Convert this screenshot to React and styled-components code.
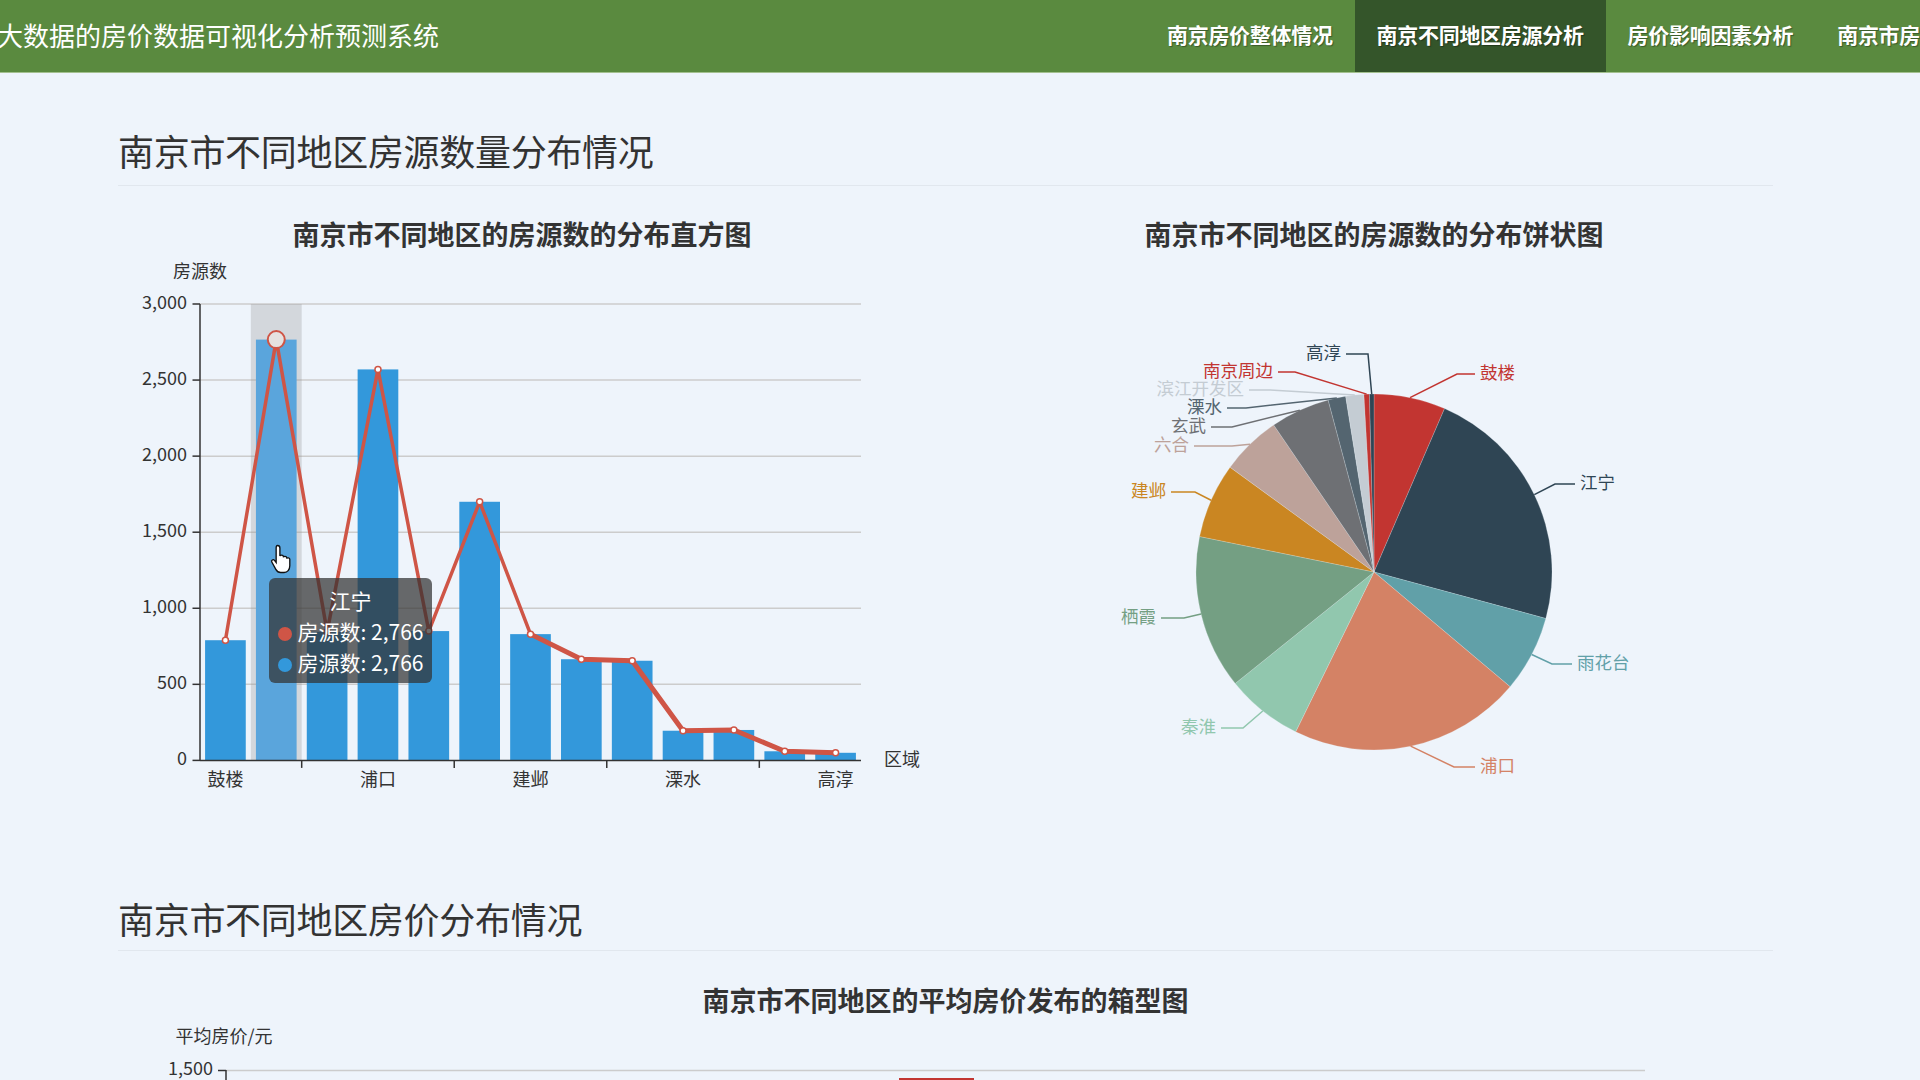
import React from 'react';
import styled, { createGlobalStyle } from 'styled-components';

const GlobalStyle = createGlobalStyle`
  html, body {
    margin: 0;
    padding: 0;
    background: #eef4fb;
    overflow: hidden;
  }
  body {
    font-family: "Microsoft YaHei", "Noto Sans CJK SC", "Noto Sans", sans-serif;
    color: #333;
  }
`;

const CJK = '"Microsoft YaHei", "Noto Sans CJK SC", sans-serif';

const districts = [
  { name: '鼓楼', value: 790 },
  { name: '江宁', value: 2766 },
  { name: '雨花台', value: 845 },
  { name: '浦口', value: 2570 },
  { name: '秦淮', value: 850 },
  { name: '栖霞', value: 1700 },
  { name: '建邺', value: 830 },
  { name: '六合', value: 665 },
  { name: '玄武', value: 655 },
  { name: '溧水', value: 195 },
  { name: '滨江开发区', value: 200 },
  { name: '南京周边', value: 60 },
  { name: '高淳', value: 50 }
];

const palette = [
  '#c23531', '#2f4554', '#61a0a8', '#d48265', '#91c7ae', '#749f83',
  '#ca8622', '#bda29a', '#6e7074', '#546570', '#c4ccd3', '#c23531', '#2f4554'
];

// leader line elbows / ends of the pie labels, page coords
const pieLabels = [
  { elbow: [1457, 374], end: [1475, 374], side: 'r' },
  { elbow: [1555, 484], end: [1575, 484], side: 'r' },
  { elbow: [1552, 664], end: [1572, 664], side: 'r' },
  { elbow: [1454, 767], end: [1475, 767], side: 'r' },
  { elbow: [1243, 728], end: [1221, 728], side: 'l' },
  { elbow: [1184, 618], end: [1161, 618], side: 'l' },
  { elbow: [1195, 492], end: [1171, 492], side: 'l' },
  { elbow: [1232, 446], end: [1194, 446], side: 'l' },
  { elbow: [1232, 427], end: [1211, 427], side: 'l' },
  { elbow: [1246, 408], end: [1227, 408], side: 'l' },
  { elbow: [1270, 390], end: [1249, 390], side: 'l' },
  { elbow: [1295, 372], end: [1278, 372], side: 'l' },
  { elbow: [1368, 354], end: [1346, 354], side: 'l' }
];

const Header = styled.header`
  display: flex;
  align-items: stretch;
  height: 72px;
  background: #5a8a3f;
  border-bottom: 1px solid #a3c08f;
  white-space: nowrap;
  overflow: hidden;
`;

const Brand = styled.div`
  display: flex;
  align-items: center;
  flex: 0 0 1148px;
  margin-left: -3px;
  padding-bottom: 4px;
  font-size: 26px;
  color: #fff;
  font-weight: 400;
`;

const Nav = styled.nav`
  display: flex;
  flex-shrink: 0;
`;

const NavItem = styled.a`
  display: flex;
  align-items: center;
  padding: 0 22px 4px;
  font-size: 21px;
  letter-spacing: -0.3px;
  font-weight: 700;
  color: #fff;
  text-decoration: none;
  text-shadow: 1px 1px 1px rgba(0, 0, 0, 0.35);
  background: ${p => (p.$active ? '#34552a' : 'transparent')};
`;

const Main = styled.main`
  padding-left: 118px;
  width: 1655px;
`;

const SectionTitle = styled.h2`
  margin: ${p => p.$top}px 0 0 0;
  font-size: 36px;
  line-height: 50px;
  letter-spacing: -0.3px;
  font-weight: 400;
  color: #333;
`;

const Divider = styled.div`
  margin-top: ${p => p.$top || 7}px;
  height: 1px;
  background: #e1e7ee;
`;

const ChartRow = styled.div`
  display: grid;
  grid-template-columns: 808px 896px;
`;

const ChartPanel = styled.div`
  position: relative;
  display: flex;
  flex-direction: column;
`;

const ChartTitle = styled.div`
  margin-top: ${p => p.$top || 32}px;
  height: 32px;
  line-height: 32px;
  text-align: center;
  font-size: 27px;
  font-weight: 700;
  color: #333;
`;

const Tooltip = styled.div`
  position: absolute;
  left: 151px;
  top: 392px;
  width: 163px;
  height: 105px;
  box-sizing: border-box;
  padding: 7px 6px 0;
  border-radius: 6px;
  background: rgba(50, 50, 50, 0.72);
  color: #fff;
  font-size: 21px;
  line-height: 31px;
  text-align: center;
  white-space: nowrap;
`;

const Dot = styled.span`
  display: inline-block;
  width: 14px;
  height: 14px;
  margin-right: 6px;
  border-radius: 50%;
  vertical-align: -1px;
  background: ${p => p.$color};
`;

const Cursor = styled.svg`
  position: absolute;
  left: 152px;
  top: 358px;
`;

const plot = { left: 200, right: 861, top: 304, bottom: 760.4, max: 3000 };
const band = (plot.right - plot.left) / districts.length;
const yOf = v => plot.bottom - (v / plot.max) * (plot.bottom - plot.top);
const xOf = i => plot.left + (i + 0.5) * band;

function BarChart() {
  const ticks = [0, 500, 1000, 1500, 2000, 2500, 3000];
  const linePts = districts.map((d, i) => `${xOf(i)},${yOf(d.value)}`).join(' ');
  const tailPts = districts.slice(6).map((d, i) => `${xOf(i + 6)},${yOf(d.value)}`).join(' ');
  return (
    <svg width="808" height="560" viewBox="118 250 808 560" fontFamily={CJK}>
      <text x="200" y="273" fontSize="18" fill="#333" textAnchor="middle" dominantBaseline="middle">房源数</text>
      {ticks.map(t => (
        <g key={t}>
          {t > 0 && <line x1={plot.left} x2={plot.right} y1={yOf(t)} y2={yOf(t)} stroke="#ccc" strokeWidth="1.5" />}
          <line x1="192.5" x2={plot.left} y1={yOf(t)} y2={yOf(t)} stroke="#333" strokeWidth="1.5" />
          <text x="187" y={yOf(t)} fontSize="18" fill="#333" textAnchor="end" dominantBaseline="middle">
            {t.toLocaleString('en-US')}
          </text>
        </g>
      ))}
      <rect x={plot.left + band} y={plot.top} width={band} height={plot.bottom - plot.top} fill="rgba(150,150,150,0.3)" />
      {districts.map((d, i) => (
        <rect
          key={d.name}
          x={plot.left + i * band + band * 0.1}
          y={yOf(d.value)}
          width={band * 0.8}
          height={plot.bottom - yOf(d.value)}
          fill={i === 1 ? '#5aa5dc' : '#3398db'}
        />
      ))}
      <line x1={plot.left} x2={plot.left} y1={plot.top} y2={plot.bottom} stroke="#333" strokeWidth="1.5" />
      <line x1={plot.left} x2={plot.right} y1={plot.bottom} y2={plot.bottom} stroke="#333" strokeWidth="1.5" />
      {[2, 5, 8, 11].map(k => (
        <line key={k} x1={plot.left + k * band} x2={plot.left + k * band} y1={plot.bottom} y2={plot.bottom + 7.5} stroke="#333" strokeWidth="1.5" />
      ))}
      {[0, 3, 6, 9, 12].map(i => (
        <text key={i} x={xOf(i)} y="781" fontSize="18" fill="#333" textAnchor="middle" dominantBaseline="middle">
          {districts[i].name}
        </text>
      ))}
      <text x="884" y="761" fontSize="18" fill="#333" dominantBaseline="middle">区域</text>
      <polyline points={linePts} fill="none" stroke="#cf5546" strokeWidth="3.5" strokeLinejoin="round" />
      <polyline points={tailPts} fill="none" stroke="#cf5546" strokeWidth="5" strokeLinejoin="round" />
      {districts.map((d, i) =>
        i === 1 ? (
          <circle key={d.name} cx={xOf(i)} cy={yOf(d.value)} r="8.5" fill="#e6e2e0" stroke="#cf5546" strokeWidth="2" />
        ) : (
          <circle key={d.name} cx={xOf(i)} cy={yOf(d.value)} r="3" fill="#fff" stroke="#cf5546" strokeWidth="1.5" />
        )
      )}
    </svg>
  );
}

function PieChart() {
  const cx = 1374;
  const cy = 572;
  const r = 178;
  const total = districts.reduce((s, d) => s + d.value, 0);
  const pt = (deg, rad) => {
    const a = (deg * Math.PI) / 180;
    return [cx + rad * Math.sin(a), cy - rad * Math.cos(a)];
  };
  let acc = 0;
  const slices = districts.map((d, i) => {
    const a0 = acc;
    const a1 = acc + (d.value / total) * 360;
    acc = a1;
    const [x0, y0] = pt(a0, r);
    const [x1, y1] = pt(a1, r);
    const large = a1 - a0 > 180 ? 1 : 0;
    return {
      ...d,
      color: palette[i],
      path: `M${cx},${cy} L${x0},${y0} A${r},${r} 0 ${large} 1 ${x1},${y1} Z`,
      edge: pt((a0 + a1) / 2, r),
      label: pieLabels[i]
    };
  });
  return (
    <svg width="896" height="560" viewBox="926 250 896 560" fontFamily={CJK}>
      {slices.map(s => (
        <path key={s.name} d={s.path} fill={s.color} stroke="rgba(238,244,251,0.35)" strokeWidth="0.6" />
      ))}
      {slices.map(s => (
        <g key={s.name}>
          <polyline
            points={`${s.edge[0]},${s.edge[1]} ${s.label.elbow[0]},${s.label.elbow[1]} ${s.label.end[0]},${s.label.end[1]}`}
            fill="none"
            stroke={s.color}
            strokeWidth="1.5"
          />
          <text
            x={s.label.end[0] + (s.label.side === 'r' ? 5 : -5)}
            y={s.label.end[1]}
            fontSize="17.5"
            fill={s.color}
            textAnchor={s.label.side === 'r' ? 'start' : 'end'}
            dominantBaseline="middle"
          >
            {s.name}
          </text>
        </g>
      ))}
    </svg>
  );
}

function BoxChart() {
  return (
    <svg width="1655" height="100" viewBox="118 1015 1655 100" fontFamily={CJK}>
      <text x="224" y="1037" fontSize="18" fill="#333" textAnchor="middle" dominantBaseline="middle">平均房价/元</text>
      <line x1="226" x2="1645" y1="1069.5" y2="1069.5" stroke="#ccc" strokeWidth="1.5" />
      <line x1="218" x2="226" y1="1069.5" y2="1069.5" stroke="#333" strokeWidth="1.5" />
      <line x1="226" x2="226" y1="1069" y2="1115" stroke="#333" strokeWidth="1.5" />
      <text x="213" y="1069" fontSize="18" fill="#333" textAnchor="end" dominantBaseline="middle">1,500</text>
      <rect x="900" y="1078" width="73" height="30" fill="#3b3a2a" stroke="#c23531" strokeWidth="2" />
    </svg>
  );
}

export default function App() {
  return (
    <>
      <GlobalStyle />
      <Header>
        <Brand>大数据的房价数据可视化分析预测系统</Brand>
        <Nav>
          <NavItem>南京房价整体情况</NavItem>
          <NavItem $active>南京不同地区房源分析</NavItem>
          <NavItem>房价影响因素分析</NavItem>
          <NavItem>南京市房价预测</NavItem>
        </Nav>
      </Header>
      <Main>
        <SectionTitle $top={52}>南京市不同地区房源数量分布情况</SectionTitle>
        <Divider $top={10} />
        <ChartRow>
          <ChartPanel>
            <ChartTitle>南京市不同地区的房源数的分布直方图</ChartTitle>
            <BarChart />
            <Cursor width="24" height="30" viewBox="0 0 16 20">
              <path
                d="M5 1c1 0 1.6.7 1.6 1.6V8c.3-.8 2.2-.8 2.3.2v.6c.3-.8 2.1-.7 2.2.3v.6c.4-.8 2.1-.6 2.1.5v4.3c0 2.6-1.6 4.5-3.8 4.5H7.1c-1.5 0-2.5-.8-3.2-2.1L1.2 12c-.6-1 .9-2.2 1.8-1.1l1.1 1.4V2.6C4.1 1.7 4.3 1 5 1z"
                fill="#fff"
                stroke="#111"
                strokeWidth="0.9"
              />
            </Cursor>
            <Tooltip>
              <div>江宁</div>
              <div><Dot $color="#cf5546" />房源数: 2,766</div>
              <div><Dot $color="#3398db" />房源数: 2,766</div>
            </Tooltip>
          </ChartPanel>
          <ChartPanel>
            <ChartTitle>南京市不同地区的房源数的分布饼状图</ChartTitle>
            <PieChart />
          </ChartPanel>
        </ChartRow>
        <SectionTitle $top={83}>南京市不同地区房价分布情况</SectionTitle>
        <Divider />
        <ChartPanel>
          <ChartTitle $top={33}>南京市不同地区的平均房价发布的箱型图</ChartTitle>
          <BoxChart />
        </ChartPanel>
      </Main>
    </>
  );
}
